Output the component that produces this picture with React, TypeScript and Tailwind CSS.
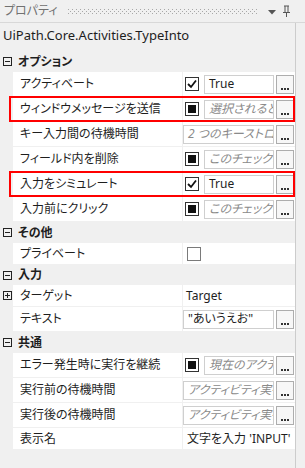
import React from "react";

function CheckBox({ kind }: { kind: "checked" | "indet" | "empty" }) {
  if (kind === "empty") {
    return <div className="w-[14px] h-[14px] border border-[#7a7a7a] bg-white shrink-0" />;
  }
  return (
    <div className="w-[14px] h-[14px] border border-[#333333] bg-white shrink-0 flex items-center justify-center">
      {kind === "checked" ? (
        <svg width="10" height="10" viewBox="0 0 10 10">
          <path d="M1 5 L4 8 L9 1.5" fill="none" stroke="#111" strokeWidth="1.8" />
        </svg>
      ) : (
        <div className="w-[8px] h-[8px] bg-[#111111]" />
      )}
    </div>
  );
}

function DotsButton() {
  return (
    <div className="w-[18px] h-[19px] border border-[#adadad] bg-[#f7f7f7] shrink-0 flex items-end justify-center pb-[3px]">
      <svg width="8" height="2" viewBox="0 0 8 2">
        <rect x="0" y="0" width="2" height="2" fill="#333" />
        <rect x="3" y="0" width="2" height="2" fill="#333" />
        <rect x="6" y="0" width="2" height="2" fill="#333" />
      </svg>
    </div>
  );
}

function Editor({
  check,
  text,
  placeholder,
}: {
  check?: "checked" | "indet";
  text: string;
  placeholder?: boolean;
}) {
  return (
    <div className="flex items-center h-full pr-px">
      {check ? (
        <div className="w-[21px] shrink-0 flex items-center pl-[2px]">
          <CheckBox kind={check} />
        </div>
      ) : null}
      <div className="flex-1 min-w-0 h-[19px] border border-[#cfcfcf] bg-white overflow-hidden flex items-center pl-[4px]">
        <span
          className={
            "whitespace-nowrap leading-[16px] " +
            (placeholder ? "italic text-[#8a8a8a]" : "text-[#1e1e1e]")
          }
        >
          {text}
        </span>
      </div>
      <div className="ml-[2px] shrink-0">
        <DotsButton />
      </div>
    </div>
  );
}

function Row({
  name,
  h,
  children,
  red,
  plus,
}: {
  name: string;
  h: "e" | "p";
  children?: React.ReactNode;
  red?: boolean;
  plus?: boolean;
}) {
  return (
    <div className="relative flex mb-px">
      <div className="w-[13px] shrink-0 flex items-center">
        {plus ? (
          <div className="ml-[3px] w-[9px] h-[9px] border border-[#222] flex items-center justify-center relative">
            <div className="absolute w-[5px] h-px bg-[#222]" />
            <div className="absolute w-px h-[5px] bg-[#222]" />
          </div>
        ) : null}
      </div>
      <div
        className={
          "w-[169px] shrink-0 bg-white flex items-center pl-[7px] text-[#1e1e1e] " +
          (h === "e" ? "h-[24px]" : "h-[21px]")
        }
      >
        <span className="whitespace-nowrap">{name}</span>
      </div>
      <div className={"ml-px w-[112px] shrink-0 bg-white " + (h === "e" ? "h-[24px]" : "h-[21px]")}>
        {children}
      </div>
      {red ? (
        <div className="absolute left-[9px] top-[-1px] bottom-[-1px] w-[286px] border-2 border-[#ff0000] pointer-events-none" />
      ) : null}
    </div>
  );
}

function Category({ label, h = 21 }: { label: string; h?: number }) {
  return (
    <div className={"flex items-center " + (h === 20 ? "h-[20px]" : "h-[21px]")}>
      <div className="ml-[3px] w-[9px] h-[9px] border border-[#222] flex items-center justify-center relative">
        <div className="absolute w-[5px] h-px bg-[#222]" />
      </div>
      <span className="ml-[6px] font-semibold text-[#1e1e1e]">{label}</span>
    </div>
  );
}

export default function App() {
  return (
    <div className="w-[305px] h-[468px] bg-[#f0f0f0] overflow-hidden flex flex-col text-[12px] leading-none [font-family:'Noto_Sans','Noto_Sans_CJK_JP',sans-serif] [font-feature-settings:'palt']">
      <div className="h-[23px] shrink-0 border-b border-[#d8d8d8] flex items-center pl-[4px] pr-[14px]">
        <span className="text-[#717171] text-[12px]">プロパティ</span>
        <div className="flex-1 ml-[10px] mr-[10px] h-[5px]">
          <svg width="100%" height="5">
            <defs>
              <pattern id="grip" width="4" height="4" patternUnits="userSpaceOnUse">
                <rect x="0" y="0" width="1" height="1" fill="#a8a8a8" />
                <rect x="2" y="2" width="1" height="1" fill="#a8a8a8" />
              </pattern>
            </defs>
            <rect width="100%" height="5" fill="url(#grip)" />
          </svg>
        </div>
        <svg width="8" height="5" viewBox="0 0 8 5" className="mt-[2px]">
          <path d="M0 0 H8 L4 4.5 Z" fill="#555" />
        </svg>
        <svg width="9" height="12" viewBox="0 0 9 12" className="ml-[6px]">
          <rect x="2" y="0.5" width="5" height="1" fill="#555" />
          <rect x="2.5" y="1" width="1" height="6" fill="#555" />
          <rect x="5.5" y="1" width="1" height="6" fill="#555" />
          <rect x="1" y="7" width="7" height="1" fill="#555" />
          <rect x="4" y="8" width="1" height="4" fill="#555" />
        </svg>
      </div>
      <div className="flex-1 flex">
        <div className="w-[296px] border-r border-[#cccccc] flex flex-col">
          <div className="h-[28px] flex items-center pl-[3px] pb-[4px] text-[13px] text-[#1e1e1e]">
            UiPath.Core.Activities.TypeInto
          </div>
          <Category label="オプション" />
          <Row name="アクティベート" h="e">
            <Editor check="checked" text="True" />
          </Row>
          <Row name="ウィンドウメッセージを送信" h="e" red>
            <Editor check="indet" text="選択されると" placeholder />
          </Row>
          <Row name="キー入力間の待機時間" h="e">
            <Editor text="2 つのキーストロー" placeholder />
          </Row>
          <Row name="フィールド内を削除" h="e">
            <Editor check="indet" text="このチェックボ" placeholder />
          </Row>
          <Row name="入力をシミュレート" h="e" red>
            <Editor check="checked" text="True" />
          </Row>
          <Row name="入力前にクリック" h="e">
            <Editor check="indet" text="このチェックボ" placeholder />
          </Row>
          <Category label="その他" />
          <Row name="プライベート" h="p">
            <div className="h-full flex items-center pl-[4px]">
              <CheckBox kind="empty" />
            </div>
          </Row>
          <Category label="入力" h={20} />
          <Row name="ターゲット" h="p" plus>
            <div className="h-full flex items-center pl-[3px] text-[#1e1e1e]">Target</div>
          </Row>
          <Row name="テキスト" h="e">
            <Editor text={'"あいうえお"'} />
          </Row>
          <Category label="共通" />
          <Row name="エラー発生時に実行を継続" h="e">
            <Editor check="indet" text="現在のアクテ" placeholder />
          </Row>
          <Row name="実行前の待機時間" h="e">
            <Editor text="アクティビティ実行" placeholder />
          </Row>
          <Row name="実行後の待機時間" h="e">
            <Editor text="アクティビティ実行" placeholder />
          </Row>
          <Row name="表示名" h="p">
            <div className="h-full flex items-center pl-[4px] text-[#1e1e1e] whitespace-nowrap overflow-hidden">
              文字を入力 'INPUT'
            </div>
          </Row>
        </div>
      </div>
    </div>
  );
}
